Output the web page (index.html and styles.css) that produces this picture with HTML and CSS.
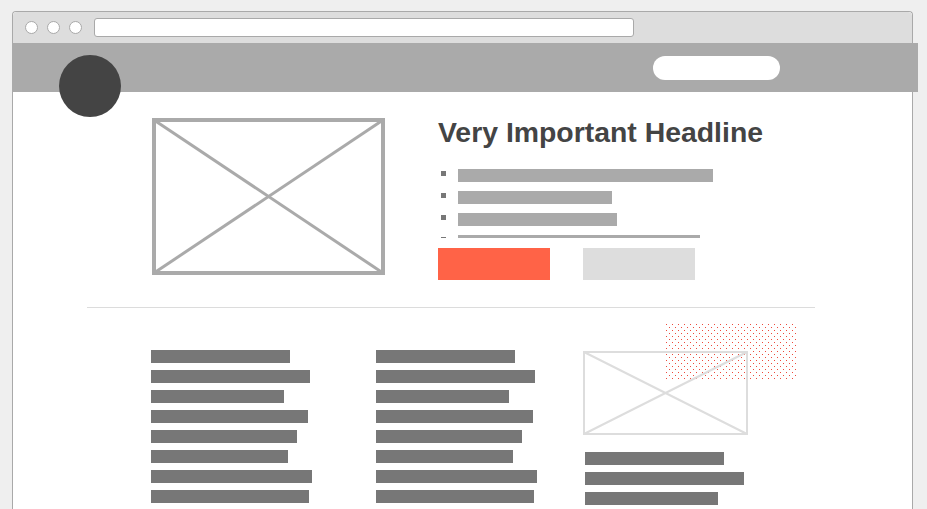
FILE: index.html
```html
<!DOCTYPE html>
<html lang="en">
<head>
<meta charset="utf-8">
<title>Wireframe</title>
<link rel="stylesheet" href="styles.css">
</head>
<body>
<div class="window">
  <div class="titlebar">
    <div class="dots-win">
      <span class="wbtn"></span><span class="wbtn"></span><span class="wbtn"></span>
    </div>
    <div class="address"></div>
  </div>
  <div class="nav">
    <div class="logo"></div>
    <div class="pill"></div>
  </div>
  <div class="page">
    <section class="hero">
      <svg class="ph ph-big" width="233" height="157" viewBox="0 0 233 157">
        <line x1="2" y1="2" x2="231" y2="155" stroke="#aaa" stroke-width="3"/>
        <line x1="231" y1="2" x2="2" y2="155" stroke="#aaa" stroke-width="3"/>
        <rect x="2" y="2" width="229" height="153" fill="none" stroke="#aaa" stroke-width="4"/>
      </svg>
      <div class="hero-text">
        <h1 class="headline">Very Important Headline</h1>
        <ul class="bullets">
          <li><span class="sq"></span><span class="lbar" style="width:255px"></span></li>
          <li><span class="sq"></span><span class="lbar" style="width:154px"></span></li>
          <li><span class="sq"></span><span class="lbar" style="width:159px"></span></li>
          <li><span class="sq"></span><span class="lbar" style="width:242px"></span></li>
        </ul>
        <div class="buttons">
          <span class="btn btn-primary"></span>
          <span class="btn btn-secondary"></span>
        </div>
      </div>
    </section>
    <hr class="divider">
    <section class="cols">
      <div class="col">
        <span class="tbar" style="width:139px"></span>
        <span class="tbar" style="width:159px"></span>
        <span class="tbar" style="width:133px"></span>
        <span class="tbar" style="width:157px"></span>
        <span class="tbar" style="width:146px"></span>
        <span class="tbar" style="width:137px"></span>
        <span class="tbar" style="width:161px"></span>
        <span class="tbar" style="width:158px"></span>
      </div>
      <div class="col">
        <span class="tbar" style="width:139px"></span>
        <span class="tbar" style="width:159px"></span>
        <span class="tbar" style="width:133px"></span>
        <span class="tbar" style="width:157px"></span>
        <span class="tbar" style="width:146px"></span>
        <span class="tbar" style="width:137px"></span>
        <span class="tbar" style="width:161px"></span>
        <span class="tbar" style="width:158px"></span>
      </div>
      <div class="col col-media">
        <svg class="dotfield" width="131" height="56" viewBox="0 0 131 56">
          <defs>
            <pattern id="dp" width="6" height="6" patternUnits="userSpaceOnUse">
              <rect x="0" y="0" width="1" height="1" fill="#ee4a3c"/>
              <rect x="3" y="3" width="1" height="1" fill="#ee4a3c"/>
            </pattern>
          </defs>
          <rect width="131" height="56" fill="url(#dp)"/>
        </svg>
        <svg class="ph ph-small" width="165" height="84" viewBox="0 0 165 84">
          <line x1="1" y1="1" x2="164" y2="83" stroke="#ddd" stroke-width="2"/>
          <line x1="164" y1="1" x2="1" y2="83" stroke="#ddd" stroke-width="2"/>
          <rect x="1" y="1" width="163" height="82" fill="none" stroke="#ddd" stroke-width="2"/>
        </svg>
        <div class="media-bars">
          <span class="tbar" style="width:139px"></span>
          <span class="tbar" style="width:159px"></span>
          <span class="tbar" style="width:133px"></span>
        </div>
      </div>
    </section>
  </div>
</div>
</body>
</html>
```
FILE: styles.css
```css
html, body {
  margin: 0;
  padding: 0;
  overflow: hidden;
  height: 509px;
}
body {
  background: #efefef;
  font-family: "Liberation Sans", Arial, sans-serif;
}
.window {
  margin: 11px 0 0 12px;
  width: 899px;
  border: 1px solid #a9a9a9;
  border-bottom: none;
  border-radius: 4px 4px 0 0;
  background: #fff;
  height: 600px;
}
.titlebar {
  height: 31px;
  background: #dddddd;
  border-radius: 4px 4px 0 0;
  display: flex;
  align-items: center;
  padding-left: 12px;
}
.dots-win {
  display: flex;
  gap: 9px;
}
.wbtn {
  width: 11px;
  height: 11px;
  border: 1px solid #a9a9a9;
  border-radius: 50%;
  background: #fff;
}
.address {
  margin-left: 12px;
  width: 538px;
  height: 17px;
  border: 1px solid #a9a9a9;
  border-radius: 3px;
  background: #fff;
}
.nav {
  position: relative;
  height: 49px;
  background: #aaaaaa;
  margin: 0 -6px 0 -1px;
  display: flex;
  align-items: center;
  justify-content: flex-end;
  padding-right: 138px;
}
.logo {
  position: absolute;
  left: 47px;
  top: 12px;
  width: 62px;
  height: 62px;
  border-radius: 50%;
  background: #444444;
}
.pill {
  width: 127px;
  height: 24px;
  border-radius: 12px;
  background: #fff;
}
.page {
  display: flex;
  flex-direction: column;
}
.hero {
  display: flex;
  align-items: flex-start;
  gap: 53px;
  padding: 26px 0 0 139px;
}
.ph {
  display: block;
  flex: none;
}
.hero-text {
  display: flex;
  flex-direction: column;
}
.headline {
  margin: 0;
  font-size: 28.4px;
  line-height: 28px;
  font-weight: bold;
  color: #444444;
  white-space: nowrap;
}
.bullets {
  list-style: none;
  margin: 23px 0 0 0;
  padding: 0;
  height: 69px;
  overflow: hidden;
  display: flex;
  flex-direction: column;
  gap: 9px;
}
.bullets li {
  display: flex;
  align-items: flex-start;
  height: 13px;
  flex: none;
}
.sq {
  width: 5px;
  height: 5px;
  background: #777;
  margin: 2px 12px 0 3px;
  flex: none;
}
.lbar {
  height: 13px;
  background: #aaaaaa;
  display: block;
}
.buttons {
  display: flex;
  gap: 33px;
  margin-top: 10px;
}
.btn {
  width: 112px;
  height: 32px;
  display: block;
}
.btn-primary {
  background: #ff6347;
}
.btn-secondary {
  background: #dddddd;
}
.divider {
  margin: 27px 0 0 74px;
  width: 728px;
  height: 1px;
  border: none;
  background: #dcdcdc;
}
.cols {
  display: grid;
  grid-template-columns: 225px 207px 220px;
  padding: 42px 0 0 138px;
  align-items: start;
}
.col {
  display: flex;
  flex-direction: column;
  gap: 7px;
}
.tbar {
  display: block;
  height: 13px;
  background: #777777;
}
.col-media {
  position: relative;
  gap: 0;
}
.dotfield {
  position: absolute;
  left: 83px;
  top: -26px;
  z-index: 0;
}
.ph-small {
  position: relative;
  z-index: 1;
  margin-top: 1px;
}
.media-bars {
  display: flex;
  flex-direction: column;
  gap: 7px;
  margin: 17px 0 0 2px;
}
```
